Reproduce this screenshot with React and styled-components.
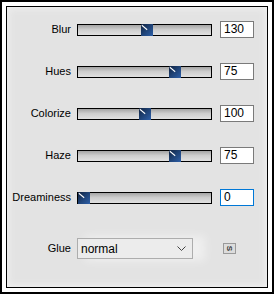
import React from 'react';
import styled, { createGlobalStyle } from 'styled-components';

const Global = createGlobalStyle`
  body {
    margin: 0;
    background: #fff;
    font-family: 'Liberation Sans', Arial, sans-serif;
  }
`;

const Frame = styled.div`
  width: 274px;
  height: 294px;
  box-sizing: border-box;
  border: 2px solid #000;
  padding: 4px;
  background: #fff;
`;

const Panel = styled.div`
  height: 100%;
  box-sizing: border-box;
  border: 1px solid #000;
  background: #e3e3e3;
  box-shadow: inset 0 0 6px 2px #efefef;
  display: flex;
  flex-direction: column;
  padding-top: 14px;
`;

const Row = styled.div`
  display: flex;
  align-items: center;
  height: ${(p) => p.h || 17}px;
  margin-bottom: ${(p) => p.gap || 25}px;
`;

const Label = styled.div`
  width: 64px;
  margin-right: 6px;
  margin-top: -2px;
  text-align: right;
  font-size: 11px;
  color: #000;
`;

const Track = styled.div`
  position: relative;
  width: 135px;
  height: 12px;
  box-sizing: border-box;
  border: 1px solid #000;
  background: linear-gradient(#a4a4a4 0%, #cdcdcd 45%, #e0e0e0 100%);
  margin-right: 8px;
`;

const Thumb = styled.div`
  position: absolute;
  top: -1px;
  width: 12px;
  height: 12px;
  background: linear-gradient(135deg, #10223f 0%, #1f4377 50%, #2d5fa8 100%);
  overflow: hidden;

  &::after {
    content: '';
    position: absolute;
    left: 0px;
    top: 3px;
    width: 7px;
    height: 1px;
    background: #fff;
    transform: rotate(40deg);
  }
`;

const Value = styled.div`
  width: 34px;
  height: 17px;
  box-sizing: border-box;
  border: 1px solid ${(p) => (p.focused ? '#0078d7' : '#7a7a7a')};
  background: #fff;
  font-size: 12px;
  line-height: 15px;
  padding-left: 3px;
  color: #000;
`;

const Select = styled.div`
  width: 116px;
  height: 21px;
  box-sizing: border-box;
  border: 1px solid #adadad;
  background: #ececec;
  display: flex;
  align-items: center;
  justify-content: space-between;
  padding: 0 6px 0 3px;
  font-size: 12px;
  color: #000;
  box-shadow: 10px 0 10px 2px rgba(255, 255, 255, 0.45);
  margin-right: 30px;
`;

const SmallButton = styled.div`
  width: 13px;
  height: 11px;
  box-sizing: border-box;
  border: 1px solid #9a9a9a;
  background: #dcdcdc;
  display: flex;
  align-items: center;
  justify-content: center;
  font-size: 8px;
  font-weight: bold;
  color: #333;

  span {
    display: inline-block;
    transform: rotate(90deg);
  }
`;

const sliders = [
  { name: 'Blur', value: 130, max: 250 },
  { name: 'Hues', value: 75, max: 100 },
  { name: 'Colorize', value: 100, max: 200 },
  { name: 'Haze', value: 75, max: 100 },
  { name: 'Dreaminess', value: 0, max: 100, focused: true },
];

const App = () => (
  <>
    <Global />
    <Frame>
      <Panel>
        {sliders.map((s, i) => (
          <Row key={s.name} gap={i === sliders.length - 1 ? 32 : 25}>
            <Label>{s.name}</Label>
            <Track>
              <Thumb style={{ left: Math.round((s.value / s.max) * 121) }} />
            </Track>
            <Value focused={s.focused}>{s.value}</Value>
          </Row>
        ))}
        <Row h={21}>
          <Label>Glue</Label>
          <Select>
            <span>normal</span>
            <svg width="9" height="5" viewBox="0 0 9 5">
              <path d="M0.5 0.5 L4.5 4.5 L8.5 0.5" fill="none" stroke="#444" strokeWidth="1" />
            </svg>
          </Select>
          <SmallButton>
            <span>S</span>
          </SmallButton>
        </Row>
      </Panel>
    </Frame>
  </>
);

export default App;
